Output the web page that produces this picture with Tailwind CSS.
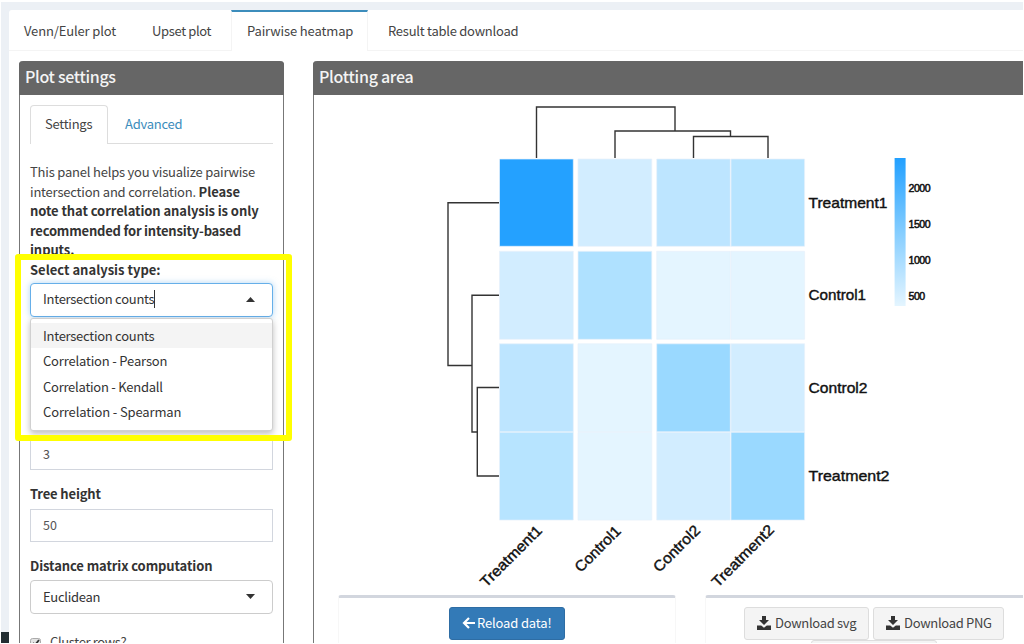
<!DOCTYPE html>
<html lang="en">
<head>
<meta charset="utf-8">
<title>Pairwise heatmap</title>
<script src="https://cdn.jsdelivr.net/npm/@tailwindcss/browser@4"></script>
</head>
<body class="h-[644px] w-[1024px] overflow-hidden bg-white pt-[2px] pl-px font-['Noto_Sans_CJK_SC',sans-serif] text-[13px] text-[#444]">
<div class="relative flex h-[641px] w-[1022px] overflow-hidden bg-[#ecf0f5] pt-2">
  <div class="flex w-2 shrink-0 flex-col justify-end"><div class="h-[11px] bg-[#222d32]"></div></div>
  <main class="flex h-[640px] min-w-0 flex-1 flex-col rounded-tl-[3px] bg-white">
    <nav class="flex h-[41px] shrink-0 leading-[42px] whitespace-nowrap">
      <a class="w-[222px] border-b border-[#f4f4f4] pl-[15px]"><span class="inline-block w-[128px] tracking-[-0.14px]">Venn/Euler plot</span><span class="tracking-[-0.35px]">Upset plot</span></a>
      <a class="w-[137px] border-x border-t-2 border-x-[#f4f4f4] border-t-[#3c8dbc] pl-[15px] leading-[38px] tracking-[-0.13px]">Pairwise heatmap</a>
      <a class="flex-1 border-b border-[#f4f4f4] pl-[20px] tracking-[-0.25px]">Result table download</a>
    </nav>
    <div class="flex min-h-0 flex-1 gap-[29px] pt-[10px] pl-[10px]">
      <section class="w-[265px] shrink-0 rounded-t-[4px] border-x-[1.5px] border-[#777]">
        <h2 class="-mx-px h-[34px] rounded-t-[4px] bg-[#666] pl-[6px] text-[16px] leading-[30px] font-medium tracking-[-0.33px] whitespace-nowrap text-[#f4f4f4]">Plot settings</h2>
        <div class="w-[253px] pl-[10px]">
          <div class="flex h-[49px] pt-[10px] leading-[36px]">
            <a class="h-[39px] w-[78px] rounded-t-[4px] border border-b-0 border-[#ddd] pl-[14px] tracking-[-0.25px]">Settings</a>
            <a class="h-[39px] flex-1 border-b border-[#ddd] pl-[17px] leading-[38px] tracking-[-0.25px] text-[#3c8dbc]">Advanced</a>
          </div>
          <p class="h-[116px] pt-[18px] leading-[19.6px] tracking-[-0.08px] whitespace-nowrap"><span class="tracking-[-0.2px]">This panel helps you visualize pairwise<br>intersection and correlation. </span><b class="text-[#333]">Please<br>note that correlation analysis is only<br><span class="tracking-[-0.2px]">recommended for intensity-based</span><br>inputs.</b></p>
          <div class="relative h-[178px]">
            <div class="h-[23px] leading-[20px] font-bold text-[#333]">Select analysis type:</div>
            <div class="flex h-[34px] items-center justify-between rounded-[4px] border border-[#66afe9] bg-white pr-[17px] pl-[12px] text-[#333] shadow-[0_0_6px_rgba(102,175,233,0.5)]">
              <span class="mb-[2px] border-r border-[#333] leading-[18px] tracking-[-0.27px]">Intersection counts</span>
              <svg class="mb-px h-[5px] w-[9px]" viewBox="0 0 9 5"><path d="M0 5 4.5 0 9 5Z" fill="#333"/></svg>
            </div>
            <div class="absolute top-[58px] left-0 h-[113px] w-full rounded-[3px] border border-[#d0d0d0] bg-white pt-[4px] leading-[25.3px] text-[#333] shadow-[0_3px_6px_rgba(0,0,0,0.25)]">
              <div class="bg-[#f4f4f4] pl-3 tracking-[-0.27px]">Intersection counts</div>
              <div class="pl-3 tracking-[-0.17px]">Correlation - Pearson</div>
              <div class="pl-3 tracking-[-0.25px]">Correlation - Kendall</div>
              <div class="pl-3 tracking-[-0.13px]">Correlation - Spearman</div>
            </div>
          </div>
          <div class="h-[32px] border border-[#d2d6de] pl-3 text-[12.5px] leading-[30px] text-[#555]">3</div>
          <div class="pt-[14px] pb-[5px] leading-[20px] font-bold tracking-[-0.15px] text-[#333]">Tree height</div>
          <div class="h-[33px] border border-[#d2d6de] pl-3 text-[12.5px] leading-[30px] text-[#555]">50</div>
          <div class="pt-[14px] pb-[4px] leading-[20px] font-bold tracking-[-0.1px] whitespace-nowrap text-[#333]">Distance matrix computation</div>
          <div class="flex h-[34px] items-center justify-between rounded-[4px] border border-[#ccc] pr-[17px] pl-[12px] text-[#333]">
            <span class="mb-px leading-[18px] tracking-[-0.3px]">Euclidean</span>
            <svg class="mb-px h-[5px] w-[9px]" viewBox="0 0 9 5"><path d="M0 0 4.5 5 9 0Z" fill="#333"/></svg>
          </div>
          <div class="flex gap-[9px] pt-[18px]">
            <svg class="mt-[6px] h-[11px] w-[11px]" viewBox="0 0 11 11"><rect x=".5" y=".5" width="10" height="10" rx="2" fill="#e4e4e4" stroke="#aaa"/><path d="m3 5 2 2 4-5" fill="none" stroke="#333" stroke-width="1.8"/></svg>
            <span class="leading-[20px] tracking-[-0.35px]">Cluster rows?</span>
          </div>
        </div>
      </section>
      <section class="min-w-0 flex-1 rounded-tl-[4px] border-l-[1.5px] border-[#777]">
        <h2 class="-ml-px h-[34px] rounded-tl-[4px] bg-[#666] pl-[6px] text-[16px] leading-[30px] font-medium tracking-[-0.27px] text-[#f4f4f4]">Plotting area</h2>
        <svg class="block h-[500px] w-[709px] font-['Liberation_Sans',sans-serif]" viewBox="314 95 709 500">
          <defs><linearGradient id="scale" x1="0" y1="0" x2="0" y2="1"><stop offset="0" stop-color="#22a0ff"/><stop offset=".5" stop-color="#84cdff"/><stop offset="1" stop-color="#e4f5ff"/></linearGradient></defs>
          <g fill="none" stroke="#333" stroke-width="1.4">
            <path d="M536.5 158V107H675V131M615 158V131H730.5V136.5M693.5 158V136.5H768V158"/>
            <path d="M499 202.8H448V365.5H472M499 295.3H472V432H477.3M499 387.5H477.3V476H499"/>
          </g>
          <g stroke="#e8f0fa" stroke-width=".7">
            <path fill="#24a1ff" d="M499.5 159h73.8v87.3h-73.8z"/>
            <path fill="#d2edff" d="M578 159h73.8v87.3H578zM499.5 251.3h73.8v88h-73.8zM731 343.8h73.6v88H731zM656.7 432.3h73.6v87.8h-73.6z"/>
            <path fill="#bde5ff" d="M656.7 159h73.6v87.3h-73.6zM499.5 343.8h73.8v88h-73.8z"/>
            <path fill="#b7e4ff" d="M731 159h73.6v87.3H731zM499.5 432.3h73.8v87.8h-73.8z"/>
            <path fill="#afe1ff" d="M578 251.3h73.8v88H578z"/>
            <path fill="#e4f5ff" d="M656.7 251.3h73.6v88h-73.6zM731 251.3h73.6v88H731zM578 343.8h73.8v88H578zM578 432.3h73.8v87.8H578z"/>
            <path fill="#9ad9ff" d="M656.7 343.8h73.6v88h-73.6zM731 432.3h73.6v87.8H731z"/>
          </g>
          <rect x="894.6" y="158" width="11" height="148" fill="url(#scale)"/>
          <g font-size="15" fill="#111" stroke="#111" stroke-width=".4">
            <text x="808.5" y="207.8" textLength="79" lengthAdjust="spacingAndGlyphs">Treatment1</text>
            <text x="808.5" y="300.2" textLength="57.5" lengthAdjust="spacingAndGlyphs">Control1</text>
            <text x="808.5" y="392.8" textLength="59" lengthAdjust="spacingAndGlyphs">Control2</text>
            <text x="808.5" y="481" textLength="81" lengthAdjust="spacingAndGlyphs">Treatment2</text>
            <text transform="translate(486.3 588) rotate(-45)" textLength="80" lengthAdjust="spacingAndGlyphs">Treatment1</text>
            <text transform="translate(580.8 573) rotate(-45)" textLength="58" lengthAdjust="spacingAndGlyphs">Control1</text>
            <text transform="translate(659.3 573) rotate(-45)" textLength="59" lengthAdjust="spacingAndGlyphs">Control2</text>
            <text transform="translate(717.7 588) rotate(-45)" textLength="81" lengthAdjust="spacingAndGlyphs">Treatment2</text>
          </g>
          <g font-size="10.6" fill="#111" stroke="#111" stroke-width=".5">
            <text x="908.6" y="191.7" textLength="22">2000</text>
            <text x="908.6" y="227.7" textLength="22">1500</text>
            <text x="908.6" y="263.7" textLength="22">1000</text>
            <text x="908.6" y="299.7" textLength="16.5">500</text>
          </g>
        </svg>
        <div class="flex h-[60px] gap-[29px] pl-[24px]">
          <div class="flex w-[338px] shrink-0 justify-center rounded-t-[3px] border-x border-t-3 border-x-[#f7f7f7] border-t-[#d2d6de] pt-[9px]">
            <button class="flex h-[33px] w-[116px] items-center gap-[2px] rounded-[3px] border border-[#2e6da4] bg-[#337ab7] pb-[2px] pl-[12px] tracking-[-0.15px] whitespace-nowrap text-white">
              <svg class="h-[12px] w-[13px] shrink-0" viewBox="0 0 13 12"><path d="M7 1 2 6l5 5M2 6h11" fill="none" stroke="#fff" stroke-width="2.2"/></svg><span>Reload data!</span>
            </button>
          </div>
          <div class="w-[340px] shrink-0 rounded-tl-[3px] border-t-3 border-l border-l-[#f7f7f7] border-t-[#d2d6de] pt-[9px]">
            <div class="flex gap-[4px] pl-[38px] tracking-[-0.3px] whitespace-nowrap">
              <button class="flex h-[33px] w-[125px] items-center gap-[4px] rounded-[3px] border border-[#ddd] bg-[#f4f4f4] pb-[2px] pl-[12px]">
                <svg class="h-[14px] w-[14px] shrink-0" viewBox="0 0 14 14"><path fill="#333" d="M5 0h4v4h3L7 9 2 4h3zM0 9.5h4.2L7 11.8l2.8-2.3H14V14H0z"/></svg><span>Download svg</span>
              </button>
              <button class="flex h-[33px] w-[131px] items-center gap-[4px] rounded-[3px] border border-[#ddd] bg-[#f4f4f4] pb-[2px] pl-[12px]">
                <svg class="h-[14px] w-[14px] shrink-0" viewBox="0 0 14 14"><path fill="#333" d="M5 0h4v4h3L7 9 2 4h3zM0 9.5h4.2L7 11.8l2.8-2.3H14V14H0z"/></svg><span>Download PNG</span>
              </button>
            </div>
            <div class="ml-[105px] h-[20px] w-[126px] rounded-t-[3px] border border-[#ddd] bg-[#f4f4f4]"></div>
          </div>
        </div>
      </section>
    </div>
  </main>
  <div class="absolute top-[252px] left-[14px] h-[187px] w-[277px] rounded-[3px] border-6 border-[#ff0]"></div>
</div>
</body>
</html>
